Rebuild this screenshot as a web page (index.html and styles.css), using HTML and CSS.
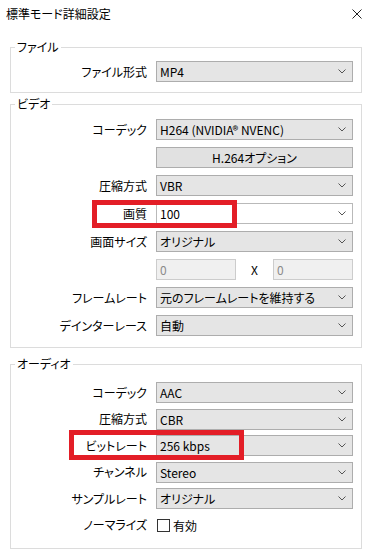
FILE: index.html
```html
<!DOCTYPE html>
<html lang="ja">

<head>
  <meta charset="utf-8">
  <title>標準モード詳細設定</title>
  <link rel="stylesheet" href="styles.css">
</head>

<body>
  <div class="dialog">
    <header class="titlebar">
      <span class="title">標準モード詳細設定</span>
      <svg class="close" width="10" height="10" viewBox="0 0 10 10">
        <path d="M0.5 0.5 L9.5 9.5 M9.5 0.5 L0.5 9.5" stroke="#222" stroke-width="1" fill="none" />
      </svg>
    </header>

    <fieldset class="group group-file">
      <legend>ファイル</legend>
      <div class="rows">
        <div class="row">
          <span class="label">ファイル形式</span>
          <div class="select"><span>MP4</span><svg class="chevron" width="8" height="5" viewBox="0 0 8 5"><path d="M0.5 0.5 L4 4 L7.5 0.5" /></svg></div>
        </div>
      </div>
    </fieldset>

    <fieldset class="group group-video">
      <legend>ビデオ</legend>
      <div class="rows">
        <div class="row">
          <span class="label">コーデック</span>
          <div class="select"><span>H264 (NVIDIA® NVENC)</span><svg class="chevron" width="8" height="5" viewBox="0 0 8 5"><path d="M0.5 0.5 L4 4 L7.5 0.5" /></svg></div>
        </div>
        <div class="row">
          <span class="label"></span>
          <div class="button">H.264オプション</div>
        </div>
        <div class="row">
          <span class="label">圧縮方式</span>
          <div class="select"><span>VBR</span><svg class="chevron" width="8" height="5" viewBox="0 0 8 5"><path d="M0.5 0.5 L4 4 L7.5 0.5" /></svg></div>
        </div>
        <div class="row">
          <span class="label">画質</span>
          <div class="select editable"><span>100</span><svg class="chevron" width="8" height="5" viewBox="0 0 8 5"><path d="M0.5 0.5 L4 4 L7.5 0.5" /></svg></div>
          <div class="highlight highlight-quality"></div>
        </div>
        <div class="row">
          <span class="label">画面サイズ</span>
          <div class="select"><span>オリジナル</span><svg class="chevron" width="8" height="5" viewBox="0 0 8 5"><path d="M0.5 0.5 L4 4 L7.5 0.5" /></svg></div>
        </div>
        <div class="row">
          <span class="label"></span>
          <div class="size">
            <div class="input">0</div>
            <span class="times">X</span>
            <div class="input">0</div>
          </div>
        </div>
        <div class="row">
          <span class="label">フレームレート</span>
          <div class="select"><span>元のフレームレートを維持する</span><svg class="chevron" width="8" height="5" viewBox="0 0 8 5"><path d="M0.5 0.5 L4 4 L7.5 0.5" /></svg></div>
        </div>
        <div class="row">
          <span class="label">デインターレース</span>
          <div class="select"><span>自動</span><svg class="chevron" width="8" height="5" viewBox="0 0 8 5"><path d="M0.5 0.5 L4 4 L7.5 0.5" /></svg></div>
        </div>
      </div>
    </fieldset>

    <fieldset class="group group-audio">
      <legend>オーディオ</legend>
      <div class="rows">
        <div class="row">
          <span class="label">コーデック</span>
          <div class="select"><span>AAC</span><svg class="chevron" width="8" height="5" viewBox="0 0 8 5"><path d="M0.5 0.5 L4 4 L7.5 0.5" /></svg></div>
        </div>
        <div class="row">
          <span class="label">圧縮方式</span>
          <div class="select"><span>CBR</span><svg class="chevron" width="8" height="5" viewBox="0 0 8 5"><path d="M0.5 0.5 L4 4 L7.5 0.5" /></svg></div>
        </div>
        <div class="row">
          <span class="label">ビットレート</span>
          <div class="select"><span>256 kbps</span><svg class="chevron" width="8" height="5" viewBox="0 0 8 5"><path d="M0.5 0.5 L4 4 L7.5 0.5" /></svg></div>
          <div class="highlight highlight-bitrate"></div>
        </div>
        <div class="row">
          <span class="label">チャンネル</span>
          <div class="select"><span>Stereo</span><svg class="chevron" width="8" height="5" viewBox="0 0 8 5"><path d="M0.5 0.5 L4 4 L7.5 0.5" /></svg></div>
        </div>
        <div class="row">
          <span class="label">サンプルレート</span>
          <div class="select"><span>オリジナル</span><svg class="chevron" width="8" height="5" viewBox="0 0 8 5"><path d="M0.5 0.5 L4 4 L7.5 0.5" /></svg></div>
        </div>
        <div class="row">
          <span class="label">ノーマライズ</span>
          <div class="check"><span class="box"></span><span>有効</span></div>
        </div>
      </div>
    </fieldset>
  </div>
</body>

</html>
```

FILE: styles.css
```css
* {
  box-sizing: border-box;
}

body {
  margin: 0;
  background: #fff;
  color: #000;
  font-family: "Noto Sans CJK JP", sans-serif;
  font-size: 12px;
  font-feature-settings: "palt";
}

.titlebar {
  display: flex;
  justify-content: space-between;
  align-items: center;
  height: 28px;
  padding: 0 5px 0 6px;
  margin-bottom: 11px;
}

.title {
  line-height: 16px;
}

.group {
  margin: 0 5px 0 10px;
  border: 1px solid #dcdcdc;
  min-width: 0;
}

.group legend {
  margin-left: 4px;
  padding: 0 2px;
  line-height: 16px;
}

.group-file {
  padding: 6px 8px 10px 0;
}

.group-video {
  margin-top: 3px;
  padding: 7px 8px 11px 0;
}

.group-audio {
  margin-top: 8px;
  padding: 10px 8px 12px 0;
}

.rows {
  display: flex;
  flex-direction: column;
  gap: 7px;
}

.group-audio .rows {
  gap: 5.5px;
}

.row {
  position: relative;
  display: grid;
  grid-template-columns: 136px 1fr;
  column-gap: 9px;
  height: 21px;
}

.label {
  align-self: center;
  text-align: right;
  line-height: 16px;
  white-space: nowrap;
}

.select {
  display: flex;
  align-items: center;
  justify-content: space-between;
  border: 1px solid #adadad;
  background: #e5e5e5;
  padding: 0 6px 0 3px;
  white-space: nowrap;
}

.select.editable {
  background: #fff;
  border-color: #b9b9b9;
}

.chevron path {
  fill: none;
  stroke: #555;
  stroke-width: 1;
}

.button {
  display: flex;
  align-items: center;
  justify-content: center;
  border: 1px solid #adadad;
  background: #e1e1e1;
}

.size {
  display: grid;
  grid-template-columns: 80px 1fr 80px;
  align-items: stretch;
}

.input {
  display: flex;
  align-items: center;
  border: 1px solid #cccccc;
  background: #f0f0f0;
  color: #8a8a8a;
  padding-left: 3px;
}

.times {
  align-self: center;
  text-align: center;
}

.check {
  display: flex;
  align-items: center;
  gap: 3px;
  padding-left: 1px;
}

.box {
  width: 13px;
  height: 13px;
  border: 1px solid #333;
  background: #fff;
}

/* red annotation frames drawn over the rows */
.highlight {
  position: absolute;
  border: 5px solid #e31e27;
  pointer-events: none;
}

.highlight-quality {
  left: 81px;
  top: -3px;
  width: 145px;
  height: 28px;
}

.highlight-bitrate {
  left: 58px;
  top: -5px;
  width: 175px;
  height: 30px;
}
```
